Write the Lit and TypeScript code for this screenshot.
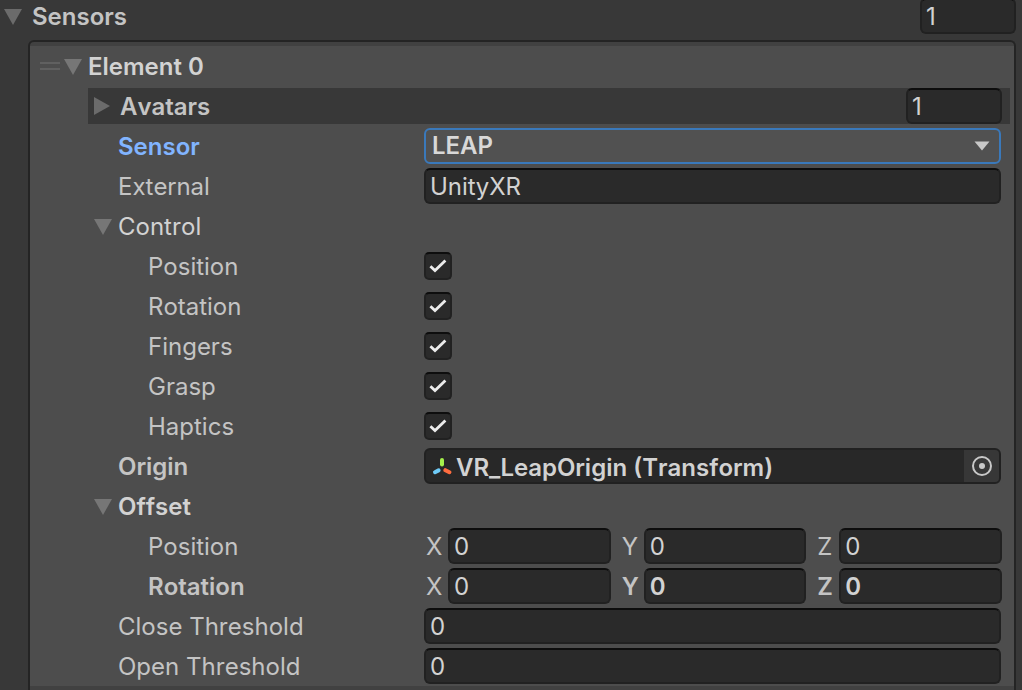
import { LitElement, html, css, svg } from "lit";
import { customElement } from "lit/decorators.js";
import { classMap } from "lit/directives/class-map.js";

interface Axis {
  name: string;
  value: string;
  bold?: boolean;
}

const arrowDown = html`<svg class="arrow" width="18" height="16" viewBox="0 0 18 16" aria-hidden="true">
  ${svg`<path d="M0 0H18L9 16Z" fill="currentColor" />`}
</svg>`;

const arrowRight = html`<svg class="arrow" width="16" height="20" viewBox="0 0 16 20" aria-hidden="true">
  ${svg`<path d="M0 0V18L16 9Z" fill="currentColor" />`}
</svg>`;

@customElement("app-root")
export class AppRoot extends LitElement {
  static styles = css`
    :host {
      display: flex;
      flex-direction: column;
      min-height: 100vh;
      box-sizing: border-box;
      background: #383838;
      color: #c4c4c4;
      font-family: Inter, "Liberation Sans", sans-serif;
      font-size: 24px;
      font-weight: 400;
      font-kerning: none;
      line-height: 36px;
    }
    * {
      box-sizing: border-box;
    }
    button,
    input,
    select {
      font: inherit;
      font-kerning: inherit;
      color: inherit;
      margin: 0;
    }
    .header {
      display: flex;
      align-items: flex-end;
      justify-content: space-between;
      height: 34px;
      overflow: hidden;
      padding: 0 6px 0 4px;
    }
    .foldout {
      display: flex;
      align-items: center;
      height: 36px;
      padding: 2px 0 0;
      border: 0;
      background: none;
      text-align: left;
      white-space: nowrap;
    }
    .arrow {
      flex: none;
      color: #767676;
      margin-right: 6px;
    }
    .header .arrow {
      color: #6b6b6b;
      margin-right: 10px;
    }
    .foldout.bold,
    .bold {
      font-weight: 600;
    }
    .field {
      display: block;
      width: 100%;
      min-width: 0;
      height: 36px;
      padding: 2px 4px 0;
      border: 2px solid #212121;
      border-top-color: #0d0d0d;
      border-radius: 6px;
      background: #2a2a2a;
      color: #d2d2d2;
      outline: none;
    }
    .size {
      flex: none;
      width: 96px;
    }
    .list {
      flex: 1;
      margin: 6px 6px 0 28px;
      padding: 4px 0;
      border: 2px solid #242424;
      border-bottom: 0;
      border-radius: 6px 6px 0 0;
      background: #414141;
    }
    .item {
      display: flex;
      flex-direction: column;
      gap: 4px;
      padding: 2px 0;
      background: #4d4d4d;
    }
    .title {
      display: flex;
      align-items: center;
      gap: 4px;
      padding-left: 10px;
      color: #d2d2d2;
    }
    .handle {
      width: 20px;
      height: 8px;
      border: solid #606060;
      border-width: 2px 0;
    }
    .avatars {
      display: flex;
      align-items: center;
      justify-content: space-between;
      height: 36px;
      margin: 0 4px 0 58px;
      padding: 0 8px 0 6px;
      background: #383838;
    }
    .avatars .arrow {
      color: #6b6b6b;
      margin-right: 10px;
    }
    .row {
      display: grid;
      grid-template-columns: 306px minmax(0, 1fr);
      align-items: center;
      height: 36px;
      padding: 0 13px 0 88px;
    }
    .row.fold {
      padding-left: 64px;
    }
    .label {
      height: 36px;
      padding-top: 1px;
    }
    .nested {
      padding-left: 30px;
    }
    .light {
      color: #d2d2d2;
    }
    .active {
      color: #81b4ff;
    }
    .picker {
      position: relative;
      display: flex;
      align-items: center;
    }
    .select {
      appearance: none;
      width: 100%;
      height: 36px;
      padding: 0 40px 0 6px;
      line-height: 30px;
      border: 2px solid #3a79bb;
      border-radius: 6px;
      background: #515151;
      color: #d8d8d8;
      outline: none;
    }
    .caret {
      position: absolute;
      right: 11px;
      pointer-events: none;
    }
    .tick {
      display: grid;
      width: 28px;
      height: 28px;
    }
    .tick > * {
      grid-area: 1 / 1;
    }
    .check {
      appearance: none;
      width: 28px;
      height: 28px;
      border: 2px solid #212121;
      border-top-color: #0d0d0d;
      border-radius: 5px;
      background: #2a2a2a;
    }
    .mark {
      pointer-events: none;
      visibility: hidden;
    }
    .check:checked + .mark {
      visibility: visible;
    }
    .object {
      display: flex;
      align-items: center;
      height: 36px;
      padding-left: 6px;
      border: 2px solid #212121;
      border-radius: 6px;
      background: #282828;
      color: #d2d2d2;
      overflow: hidden;
    }
    .object-name {
      flex: 1;
      min-width: 0;
      padding: 4px 0 0 4px;
      white-space: nowrap;
      overflow: hidden;
      text-overflow: ellipsis;
    }
    .choose {
      display: grid;
      place-items: center;
      width: 35px;
      height: 32px;
      padding: 0;
      border: 0;
      background: #373737;
    }
    .row.wide {
      padding-right: 12px;
    }
    .vector {
      display: grid;
      grid-template-columns: repeat(3, minmax(0, 1fr));
      gap: 9px;
    }
    .axis {
      display: grid;
      grid-template-columns: 24px minmax(0, 1fr);
      height: 36px;
    }
    .axis-name {
      padding: 1px 0 0 2px;
    }
  `;

  private text(id: string, label: string, value: string) {
    return html`<div class="row">
      <label class="label" for=${id}>${label}</label>
      <input class="field" id=${id} type="text" .value=${value} />
    </div>`;
  }

  private toggle(label: string) {
    const id = "control-" + label.toLowerCase();
    return html`<div class="row">
      <label class="label nested" for=${id}>${label}</label>
      <div class="tick">
        <input class="check" id=${id} type="checkbox" checked />
        <svg class="mark" width="28" height="28" viewBox="0 0 28 28" aria-hidden="true">
          <path d="M6.4 14.2L11 18.6L21.4 8.6" fill="none" stroke="#ececec" stroke-width="2.8" />
        </svg>
      </div>
    </div>`;
  }

  private vector(label: string, axes: Axis[], bold = false) {
    return html`<div class="row wide" role="group" aria-label=${label}>
      <span class=${classMap({ label: true, nested: true, bold })}>${label}</span>
      <div class="vector">
        ${axes.map(
          (a) => html`<label class=${classMap({ axis: true, bold: !!a.bold })}>
            <span class="axis-name">${a.name}</span>
            <input class="field" type="text" .value=${a.value} />
          </label>`
        )}
      </div>
    </div>`;
  }

  render() {
    return html`
      <div class="header">
        <button class="foldout bold" aria-expanded="true">${arrowDown}Sensors</button>
        <input class="field size" type="text" aria-label="Sensors size" .value=${"1"} />
      </div>
      <div class="list">
        <div class="item">
          <div class="title">
            <span class="handle"></span>
            <button class="foldout bold" aria-expanded="true">${arrowDown}Element 0</button>
          </div>
          <div class="avatars">
            <button class="foldout bold" aria-expanded="false">${arrowRight}Avatars</button>
            <input class="field size" type="text" aria-label="Avatars size" .value=${"1"} />
          </div>
          <div class="row">
            <label class="label bold active" for="sensor">Sensor</label>
            <div class="picker">
              <select class="select bold" id="sensor">
                <option>LEAP</option>
              </select>
              <svg class="caret" width="16" height="10" viewBox="0 0 16 10" aria-hidden="true">
                <path d="M0.5 0.5H15.5L8 9.5Z" fill="#c8c8c8" />
              </svg>
            </div>
          </div>
          ${this.text("external", "External", "UnityXR")}
          <div class="row fold">
            <button class="foldout light" aria-expanded="true">${arrowDown}Control</button>
          </div>
          ${["Position", "Rotation", "Fingers", "Grasp", "Haptics"].map((l) => this.toggle(l))}
          <div class="row">
            <label class="label bold" for="origin">Origin</label>
            <div class="object">
              <svg width="20" height="20" viewBox="0 0 20 20" fill="none" stroke-width="4" stroke-linecap="round" aria-hidden="true">
                <path d="M10 4V8.6" stroke="#a5f04b" />
                <path d="M3 16.2L6.6 14.4" stroke="#6fcbf7" />
                <path d="M13.4 14.2L17.4 16.2" stroke="#ff6c3f" />
              </svg>
              <span class="object-name bold">VR_LeapOrigin (Transform)</span>
              <button class="choose" id="origin" aria-label="Select origin">
                <svg width="22" height="22" viewBox="0 0 22 22" aria-hidden="true">
                  <circle cx="11" cy="11" r="9" fill="none" stroke="#c8c8c8" stroke-width="2" />
                  <circle cx="11" cy="11" r="3" fill="#c8c8c8" />
                </svg>
              </button>
            </div>
          </div>
          <div class="row fold">
            <button class="foldout bold light" aria-expanded="true">${arrowDown}Offset</button>
          </div>
          ${this.vector("Position", [
            { name: "X", value: "0" },
            { name: "Y", value: "0" },
            { name: "Z", value: "0" },
          ])}
          ${this.vector(
            "Rotation",
            [
              { name: "X", value: "0" },
              { name: "Y", value: "0", bold: true },
              { name: "Z", value: "0", bold: true },
            ],
            true
          )}
          ${this.text("close", "Close Threshold", "0")}
          ${this.text("open", "Open Threshold", "0")}
        </div>
      </div>
    `;
  }
}
